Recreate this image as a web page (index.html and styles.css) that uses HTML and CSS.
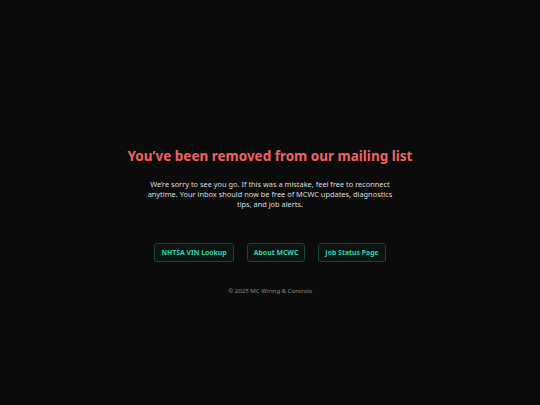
FILE: index.html
```html
<!DOCTYPE html>
<html lang="en">
<head>
<meta charset="utf-8">
<title>Unsubscribed</title>
<link rel="stylesheet" href="styles.css">
</head>
<body>
<main class="page">
  <h1 class="title">You’ve been removed from our mailing list</h1>
  <p class="lead">We’re sorry to see you go. If this was a mistake, feel free to reconnect anytime. Your inbox should now be free of MCWC updates, diagnostics tips, and job alerts.</p>
  <nav class="links">
    <a class="btn" href="#">NHTSA VIN Lookup</a>
    <a class="btn" href="#">About MCWC</a>
    <a class="btn" href="#">Job Status Page</a>
  </nav>
  <footer class="foot">© 2025 MC Wiring &amp; Controls</footer>
</main>
</body>
</html>
```
FILE: styles.css
```css
html, body {
  margin: 0;
  padding: 0;
  background: #0b0b0b;
  height: 100%;
}
body {
  font-family: "Noto Sans", "Open Sans", sans-serif;
  color: #e6e6e6;
}
.page {
  display: flex;
  flex-direction: column;
  align-items: center;
  padding-top: 146px;
  text-align: center;
}
.title {
  margin: 0;
  font-size: 13.5px;
  font-weight: 700;
  color: #f06262;
  line-height: 20px;
}
.lead {
  margin: 13px 0 0;
  max-width: 248px;
  font-size: 7.4px;
  line-height: 10px;
  color: #dedede;
}
.links {
  display: flex;
  gap: 13px;
  margin-top: 34px;
}
.btn {
  display: block;
  padding: 3px 6px;
  font-size: 6.9px;
  line-height: 11px;
  font-weight: 700;
  color: #2fd3b0;
  text-decoration: none;
  border: 1px solid #17463d;
  border-radius: 3px;
  background: #0c1412;
}
.foot {
  margin-top: 24px;
  font-size: 6.1px;
  color: #8a8a8a;
}
```
